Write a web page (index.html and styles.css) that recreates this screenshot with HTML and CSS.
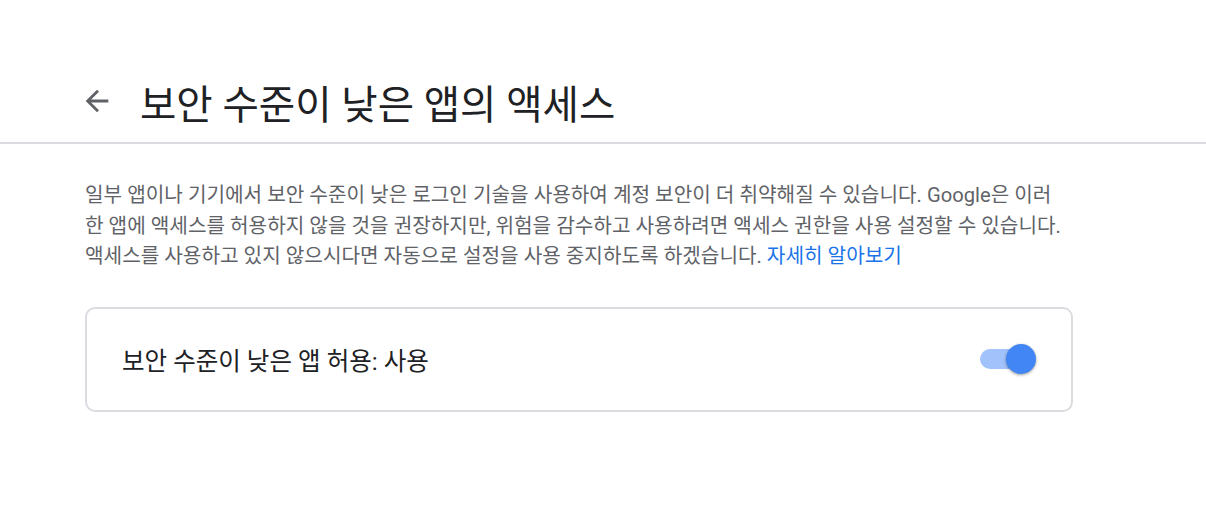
FILE: index.html
```html
<!DOCTYPE html>
<html lang="ko">
<head>
<meta charset="UTF-8">
<meta name="viewport" content="width=device-width, initial-scale=1.0">
<title>보안 수준이 낮은 앱의 액세스</title>
<link rel="stylesheet" href="styles.css">
</head>
<body>
  <header class="page-header">
    <button class="back-button" aria-label="뒤로">
      <svg viewBox="0 0 24 24"><path d="M20 11H7.83l5.59-5.59L12 4l-8 8 8 8 1.41-1.41L7.83 13H20v-2z" fill="#5f6368"/></svg>
    </button>
    <h1 class="page-title">보안 수준이 낮은 앱의 액세스</h1>
  </header>

  <main class="content">
    <p class="description">일부 앱이나 기기에서 보안 수준이 낮은 로그인 기술을 사용하여 계정 보안이 더 취약해질 수 있습니다. Google은 이러<br>한 앱에 액세스를 허용하지 않을 것을 권장하지만, 위험을 감수하고 사용하려면 액세스 권한을 사용 설정할 수 있습니다.<br>액세스를 사용하고 있지 않으시다면 자동으로 설정을 사용 중지하도록 하겠습니다. <a href="#" class="learn-more">자세히 알아보기</a></p>

    <div class="setting-card">
      <span class="setting-label">보안 수준이 낮은 앱 허용: 사용</span>
      <div class="toggle on">
        <div class="toggle-track"></div>
        <div class="toggle-thumb"></div>
      </div>
    </div>
  </main>
</body>
</html>
```

FILE: styles.css
```css
body {
  margin: 0;
  padding: 0;
  background-color: #fff;
  font-family: Roboto, "Noto Sans CJK KR", sans-serif;
  color: #202124;
}

.page-header {
  display: flex;
  align-items: center;
  height: 144px;
  padding: 60px 0 0 80px;
  box-sizing: border-box;
  border-bottom: 2px solid #dadce0;
}

.back-button {
  display: flex;
  width: 34px;
  height: 34px;
  padding: 0;
  border: none;
  background: none;
  cursor: pointer;
}

.back-button svg {
  width: 34px;
  height: 34px;
}

.page-title {
  margin: 0 0 0 26px;
  font-size: 39.5px;
  font-weight: 400;
  color: #202124;
}

.content {
  padding: 36px 0 0 85px;
  width: 988px;
}

.description {
  margin: 0;
  font-size: 20.2px;
  line-height: 30.5px;
  color: #5f6368;
}

.learn-more {
  color: #1a73e8;
  text-decoration: none;
}

.setting-card {
  display: flex;
  align-items: center;
  justify-content: space-between;
  margin-top: 35px;
  height: 105px;
  padding: 0 35px 0 35px;
  border: 2px solid #dadce0;
  border-radius: 10px;
  box-sizing: border-box;
}

.setting-label {
  font-size: 24.5px;
  color: #202124;
}

.toggle {
  position: relative;
  width: 56px;
  height: 32px;
}

.toggle-track {
  position: absolute;
  left: 0;
  top: 6px;
  width: 50px;
  height: 20px;
  border-radius: 10px;
  background-color: #a1c2fa;
}

.toggle-thumb {
  position: absolute;
  right: 0;
  top: 1px;
  width: 30px;
  height: 30px;
  border-radius: 50%;
  background-color: #4285f4;
  box-shadow: 0 1px 3px rgba(0, 0, 0, 0.4);
}
```
